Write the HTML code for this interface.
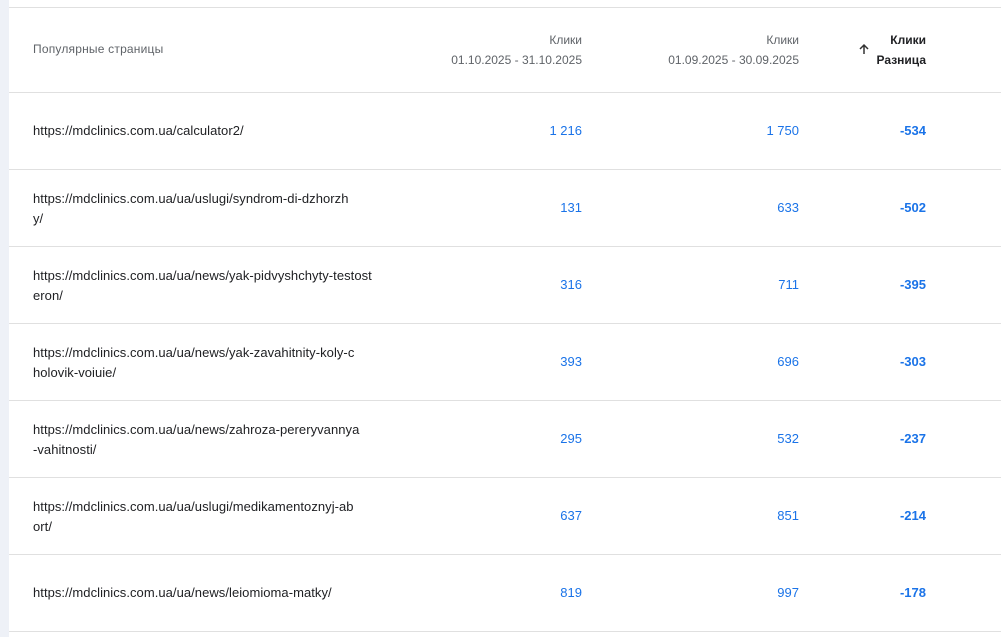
<!DOCTYPE html>
<html><head><meta charset="utf-8"><style>
body{margin:0;width:1001px;height:637px;overflow:hidden;background:#fff;font-family:"Liberation Sans",Arial,sans-serif;position:relative}
.strip{position:absolute;left:0;top:0;width:9px;height:637px;background:#eef1f7}
.hl{position:absolute;left:9px;right:0;height:1px;background:#e0e0e0}
.t{position:absolute;white-space:nowrap}
.h{font-size:12px;color:#5f6368;line-height:20px;text-align:right}
.u{font-size:13px;color:#202124;line-height:20px;left:33px;letter-spacing:0.05px}
.n{font-size:13px;color:#1a73e8;text-align:right}
.d{font-size:13px;color:#1a73e8;font-weight:bold;text-align:right}
</style></head><body>
<div class="strip"></div>
<div class="hl" style="top:7px"></div>
<div class="hl" style="top:92px"></div>
<div class="t" style="left:33px;top:42px;font-size:12px;color:#5f6368;letter-spacing:0.2px">Популярные страницы</div>
<div class="t h" style="right:419px;top:30px">Клики<br>01.10.2025 - 31.10.2025</div>
<div class="t h" style="right:202px;top:30px">Клики<br>01.09.2025 - 30.09.2025</div>
<div class="t h" style="right:75px;top:30px;color:#202124;font-weight:bold">Клики<br>Разница</div>
<svg class="t" style="left:858px;top:43px" width="12" height="12" viewBox="0 0 12 12"><path d="M6 11V2M2 6l4-4 4 4" stroke="#333" stroke-width="1.5" fill="none"/></svg>

<div class="hl" style="top:169px"></div>
<div class="hl" style="top:246px"></div>
<div class="hl" style="top:323px"></div>
<div class="hl" style="top:400px"></div>
<div class="hl" style="top:477px"></div>
<div class="hl" style="top:554px"></div>
<div class="hl" style="top:631px"></div>

<div class="t u" style="top:121px">https://mdclinics.com.ua/calculator2/</div>
<div class="t n" style="right:419px;top:123px">1 216</div><div class="t n" style="right:202px;top:123px">1 750</div><div class="t d" style="right:75px;top:123px">-534</div>

<div class="t u" style="top:189px">https://mdclinics.com.ua/ua/uslugi/syndrom-di-dzhorzh<br>y/</div>
<div class="t n" style="right:419px;top:200px">131</div><div class="t n" style="right:202px;top:200px">633</div><div class="t d" style="right:75px;top:200px">-502</div>

<div class="t u" style="top:266px">https://mdclinics.com.ua/ua/news/yak-pidvyshchyty-testost<br>eron/</div>
<div class="t n" style="right:419px;top:277px">316</div><div class="t n" style="right:202px;top:277px">711</div><div class="t d" style="right:75px;top:277px">-395</div>

<div class="t u" style="top:343px">https://mdclinics.com.ua/ua/news/yak-zavahitnity-koly-c<br>holovik-voiuie/</div>
<div class="t n" style="right:419px;top:354px">393</div><div class="t n" style="right:202px;top:354px">696</div><div class="t d" style="right:75px;top:354px">-303</div>

<div class="t u" style="top:420px">https://mdclinics.com.ua/ua/news/zahroza-pereryvannya<br>-vahitnosti/</div>
<div class="t n" style="right:419px;top:431px">295</div><div class="t n" style="right:202px;top:431px">532</div><div class="t d" style="right:75px;top:431px">-237</div>

<div class="t u" style="top:497px">https://mdclinics.com.ua/ua/uslugi/medikamentoznyj-ab<br>ort/</div>
<div class="t n" style="right:419px;top:508px">637</div><div class="t n" style="right:202px;top:508px">851</div><div class="t d" style="right:75px;top:508px">-214</div>

<div class="t u" style="top:583px">https://mdclinics.com.ua/ua/news/leiomioma-matky/</div>
<div class="t n" style="right:419px;top:585px">819</div><div class="t n" style="right:202px;top:585px">997</div><div class="t d" style="right:75px;top:585px">-178</div>
</body></html>
